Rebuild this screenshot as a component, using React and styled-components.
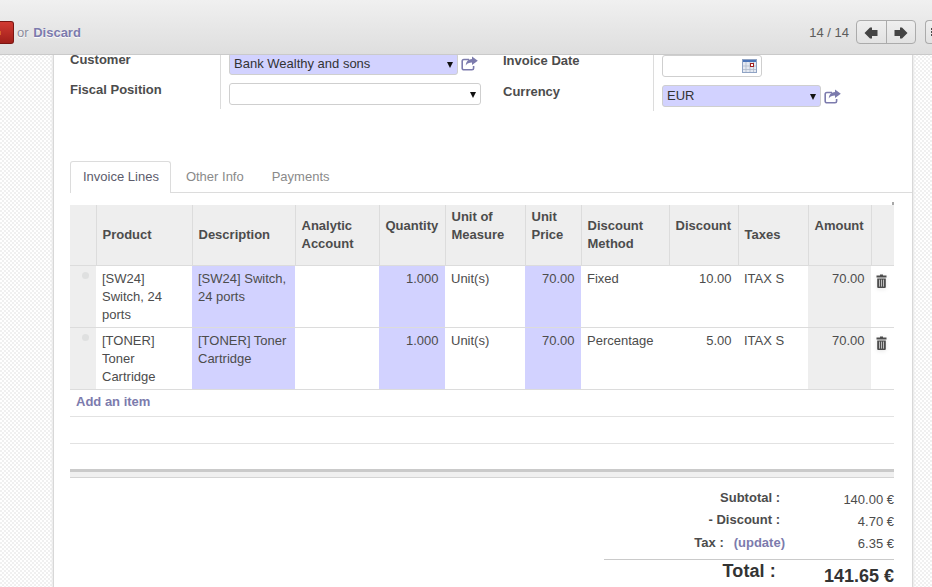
import React from "react";
import styled, { createGlobalStyle } from "styled-components";

const GlobalStyle = createGlobalStyle`
  html, body {
    margin: 0;
    padding: 0;
    height: 587px;
    overflow: hidden;
  }
  body {
    font-family: "Liberation Sans", Arial, sans-serif;
    font-size: 13px;
    line-height: 18px;
    color: #4c4c4c;
    background-color: #fff;
    background-image:
      linear-gradient(45deg, #f0f0f0 25%, transparent 25%, transparent 75%, #f0f0f0 75%),
      linear-gradient(45deg, #f0f0f0 25%, transparent 25%, transparent 75%, #f0f0f0 75%);
    background-size: 4px 4px;
    background-position: 0 0, 2px 2px;
  }
`;

const Page = styled.div`
  width: 932px;
  height: 587px;
  overflow: hidden;
  display: flex;
  flex-direction: column;
`;

const Toolbar = styled.div`
  height: 54px;
  flex: none;
  box-sizing: content-box;
  border-bottom: 1px solid #cacaca;
  background: linear-gradient(#f0f0f0, #dedede);
  display: flex;
  align-items: flex-start;
  position: relative;
  z-index: 2;
`;

const SaveButton = styled.div`
  width: 14px;
  height: 23px;
  margin-top: 21px;
  background-image: linear-gradient(#d23a32, #a01f1a);
  border: 1px solid #7a1512;
  border-left: none;
  border-radius: 0 3px 3px 0;
  box-sizing: border-box;
  position: relative;
`;

const SaveGlyph = styled.i`
  position: absolute;
  left: 0;
  top: 9px;
  width: 1px;
  height: 4px;
  background: #d8602a;
`;

const DiscardText = styled.span`
  margin: 24px 0 0 3px;
  color: #8b8b9b;
  text-shadow: 0 1px 1px #fff;
`;

const DiscardLink = styled.b`
  color: #7c7bad;
  margin-left: 1px;
`;

const Pager = styled.div`
  margin: 20px 0 0 auto;
  display: flex;
  align-items: flex-start;
`;

const PagerCount = styled.span`
  margin: 4px 8px 0 0;
  color: #5c5c5c;
  position: relative;
  left: 1px;
`;

const PagerGroup = styled.div`
  display: flex;
  width: 60px;
  height: 24px;
  box-sizing: border-box;
  border: 1px solid #ababab;
  border-radius: 4px;
  background: linear-gradient(#efefef, #e2e2e2);
`;

const PagerButton = styled.div`
  flex: 1;
  display: flex;
  align-items: center;
  justify-content: center;
  padding-top: 2px;
  & + & {
    border-left: 1px solid #ababab;
  }
`;

const MoreButton = styled(PagerGroup)`
  width: 20px;
  margin-left: 9px;
  flex: none;
  padding: 7px 0 0 5px;
  border-right: none;
  border-radius: 4px 0 0 4px;
  margin-right: -13px;
  gap: 1px;
  flex-direction: column;
`;

const MoreDot = styled.i`
  display: block;
  width: 3px;
  height: 2px;
  background: #4c4c4c;
`;

const Sheet = styled.div`
  width: 858px;
  flex: 1;
  min-height: 0;
  margin-left: 54px;
  box-sizing: border-box;
  background: #fff;
  box-shadow: -1px 0 0 #d8d8d8, 1px 0 0 #d8d8d8, -2px 0 2px #e8e8e8, 2px 0 2px #e8e8e8;
  padding: 0 18px 0 16px;
`;

const FormGrid = styled.div`
  display: flex;
  height: 106px;
  align-items: flex-start;
`;

const FormGroup = styled.div`
  width: ${(p) => p.$width}px;
  flex: none;
  display: grid;
  grid-template-columns: 150px 1fr;
  align-content: start;
`;

const Label = styled.b`
  display: block;
  color: #4c4c4c;
  margin-top: ${(p) => p.$shift}px;
`;

const FieldCell = styled.div`
  border-left: 1px solid #dcdcdc;
  padding: ${(p) => p.$top}px 0 0 8px;
  height: ${(p) => p.$height}px;
  box-sizing: border-box;
  display: flex;
  align-items: flex-start;
  gap: 3px;
`;

const Input = styled.div`
  width: ${(p) => p.$width}px;
  height: 22px;
  flex: none;
  box-sizing: border-box;
  margin-top: ${(p) => p.$shift || 0}px;
  border: 1px solid #cfcfcf;
  border-radius: 3px;
  background: ${(p) => (p.$required ? "#d2d2ff" : "#fff")};
  color: #333;
  padding: 0 4px;
  line-height: 20px;
  display: flex;
  align-items: center;
  justify-content: space-between;
`;

const Caret = styled.span`
  width: 0;
  height: 0;
  margin: 2px 0 0 0;
  border-left: 3px solid transparent;
  border-right: 3px solid transparent;
  border-top: 6px solid #111;
`;

const ShareIcon = styled.svg`
  flex: none;
  width: 17px;
  height: 15px;
  margin-top: ${(p) => p.$top}px;
`;

const Tabs = styled.div`
  height: 31px;
  margin: 0 -18px 12px 0;
  border-bottom: 1px solid #dcdcdc;
  display: flex;
  box-sizing: content-box;
`;

const Tab = styled.div`
  height: ${(p) => (p.$active ? 32 : 31)}px;
  box-sizing: border-box;
  padding: 6px ${(p) => (p.$active ? 11 : 12)}px 0 12px;
  margin-right: 2px;
  color: ${(p) => (p.$active ? "#5c5c6c" : "#8a8a8a")};
  background: ${(p) => (p.$active ? "#fff" : "transparent")};
  border: 1px solid ${(p) => (p.$active ? "#dcdcdc" : "transparent")};
  border-bottom: none;
  border-radius: 3px 3px 0 0;
  position: relative;
  z-index: 1;
`;

const TableWrap = styled.div`
  width: 824px;
  position: relative;
`;

const CornerMark = styled.i`
  position: absolute;
  right: 0;
  top: -3px;
  width: 2px;
  height: 3px;
  background: #a8a8a8;
`;

const LinesTable = styled.table`
  width: 824px;
  table-layout: fixed;
  border-collapse: collapse;
`;

const Head = styled.th`
  height: 60px;
  padding: ${(p) => p.$top || 0}px 0 0 6px;
  box-sizing: border-box;
  background: #eeeeee;
  border-left: 1px solid #dcdcdc;
  border-bottom: 1px solid #dcdcdc;
  font-size: 13px;
  line-height: 18px;
  font-weight: bold;
  text-align: left;
  color: #4c4c4c;
  vertical-align: ${(p) => (p.$top ? "top" : "middle")};
  &:first-child {
    border-left: none;
  }
`;

const Cell = styled.td`
  height: 62px;
  padding: 4px 6.5px 0 6px;
  box-sizing: border-box;
  vertical-align: top;
  color: #4c4c4c;
  text-align: ${(p) => (p.$right ? "right" : "left")};
  background: ${(p) => (p.$required ? "#d2d2ff" : p.$grey ? "#eeeeee" : "#fff")};
  border-bottom: 1px solid #dcdcdc;
`;

const HandleCell = styled(Cell)`
  padding: 6px 0 0 12px;
  background: #eeeeee;
`;

const Handle = styled.i`
  display: block;
  width: 7px;
  height: 7px;
  border-radius: 50%;
  background: #dfe0e0;
`;

const TrashButton = styled.svg`
  display: block;
  width: 11px;
  height: 14px;
  margin: 4px 0 0 -1px;
  filter: drop-shadow(0 1px 2px #e4e4e4);
`;

const FillRow = styled.div`
  height: ${(p) => p.$height}px;
  box-sizing: border-box;
  border-bottom: 1px solid #e2e2e2;
  padding: 3px 0 0 6px;
`;

const AddItem = styled.b`
  color: #7c7bad;
`;

const TableFoot = styled.div`
  height: 9px;
  margin-top: 25px;
  box-sizing: border-box;
  background: #f0f0f0;
  border-top: 3px solid #cacaca;
  border-bottom: 1px solid #d4d4d4;
`;

const Totals = styled.div`
  margin: 13px 0 0 534px;
  width: 290px;
`;

const TotalRow = styled.div`
  display: flex;
  justify-content: flex-end;
  align-items: baseline;
  height: 22px;
`;

const TotalLabel = styled.b`
  position: relative;
  top: ${(p) => p.$lift}px;
  color: #4c4c4c;
  margin-right: ${(p) => p.$gap}px;
  white-space: pre;
`;

const UpdateLink = styled.b`
  position: relative;
  top: -1px;
  color: #7c7bad;
  margin-right: 29px;
  margin-left: 10px;
`;

const TotalValue = styled.span`
  width: 80px;
  flex: none;
  text-align: right;
  color: #4c4c4c;
`;

const GrandRow = styled.div`
  display: flex;
  justify-content: flex-end;
  align-items: baseline;
  border-top: 1px solid #cacaca;
  margin-top: 2px;
  height: 28px;
`;

const GrandLabel = styled.b`
  font-size: 18px;
  color: #333;
  position: relative;
  top: -5px;
  margin-right: 48px;
  line-height: 24px;
  letter-spacing: 0.1px;
`;

const GrandValue = styled.b`
  font-size: 18px;
  color: #333;
  line-height: 32px;
`;

const Share = ({ top }) => (
  <ShareIcon $top={top} viewBox="0 0 17 15">
    <path d="M8 3.5H3A1.6 1.6 0 0 0 1.2 5v7.2A1.6 1.6 0 0 0 3 13.8h8a1.6 1.6 0 0 0 1.6-1.6V10" fill="none" stroke="#7c7bad" strokeWidth="1.6" />
    <path d="M11 0.5l5.8 4.3L11 9V6.4c-3 0-4.8 0.8-6.2 3C5 5.6 7.4 3.2 11 3z" fill="#7c7bad" />
  </ShareIcon>
);

const Trash = () => (
  <TrashButton viewBox="0 0 11 14">
    <path d="M4 0.5h3v1h3.5v2H0.5v-2H4z" fill="#4c4c4c" />
    <path d="M1.2 4.4h8.6V13a1 1 0 0 1-1 1H2.2a1 1 0 0 1-1-1z" fill="#4c4c4c" />
    <path d="M3.5 5.6v7M5.5 5.6v7M7.5 5.6v7" stroke="#c8c8c8" strokeWidth="0.9" />
  </TrashButton>
);

const Arrow = ({ left }) => (
  <svg width="14" height="12" viewBox="0 0 14 12">
    <path
      d={left ? "M0.5 6L6 0.5H8V3H13.5V9H8V11.5H6z" : "M13.5 6L8 0.5H6V3H0.5V9H6V11.5H8z"}
      fill="#444"
    />
  </svg>
);

const CalendarIcon = () => (
  <svg width="15" height="14" viewBox="0 0 15 14">
    <rect x="0" y="0" width="15" height="14" fill="#e4e9f2" />
    <rect x="0" y="0" width="15" height="3" fill="#4a74b8" />
    <path d="M0 7h15M0 10.5h15M4 3v11M8 3v11M11.5 3v11" stroke="#aeb9ca" strokeWidth="0.8" />
    <rect x="8.5" y="4.5" width="3" height="3" fill="#fff" stroke="#a02020" />
    <rect x="0.5" y="0.5" width="14" height="13" fill="none" stroke="#8fa3c4" />
  </svg>
);

const columns = [26, 96, 103, 84, 66, 80, 56, 88, 69, 70, 63, 23];

const lines = [
  {
    product: "[SW24] Switch, 24 ports",
    description: "[SW24] Switch, 24 ports",
    method: "Fixed",
    discount: "10.00",
  },
  {
    product: "[TONER] Toner Cartridge",
    description: "[TONER] Toner Cartridge",
    method: "Percentage",
    discount: "5.00",
  },
];

const App = () => {
  return (
    <Page>
      <GlobalStyle />
      <Toolbar>
        <SaveButton>
          <SaveGlyph />
        </SaveButton>
        <DiscardText>
          or <DiscardLink>Discard</DiscardLink>
        </DiscardText>
        <Pager>
          <PagerCount>14 / 14</PagerCount>
          <PagerGroup>
            <PagerButton><Arrow left /></PagerButton>
            <PagerButton><Arrow /></PagerButton>
          </PagerGroup>
          <MoreButton>
            <MoreDot />
            <MoreDot />
            <MoreDot />
          </MoreButton>
        </Pager>
      </Toolbar>
      <Sheet>
        <FormGrid>
          <FormGroup $width={433}>
            <Label $shift={-4}>Customer</Label>
            <FieldCell $top={0} $height={27}>
              <Input $width={229} $required $shift={-2}>
                Bank Wealthy and sons
                <Caret />
              </Input>
              <Share top={1} />
            </FieldCell>
            <Label $shift={-1}>Fiscal Position</Label>
            <FieldCell $top={1} $height={27}>
              <Input $width={252}>
                <span />
                <Caret />
              </Input>
            </FieldCell>
          </FormGroup>
          <FormGroup $width={409}>
            <Label $shift={-3}>Invoice Date</Label>
            <FieldCell $top={0} $height={29}>
              <Input $width={100}>
                <span />
                <CalendarIcon />
              </Input>
            </FieldCell>
            <Label $shift={-1}>Currency</Label>
            <FieldCell $top={1} $height={27}>
              <Input $width={159} $required>
                EUR
                <Caret />
              </Input>
              <Share top={4} />
            </FieldCell>
          </FormGroup>
        </FormGrid>
        <Tabs>
          <Tab $active>Invoice Lines</Tab>
          <Tab>Other Info</Tab>
          <Tab>Payments</Tab>
        </Tabs>
        <TableWrap>
          <CornerMark />
          <LinesTable>
            <colgroup>
              {columns.map((width, i) => (
                <col key={i} width={width} />
              ))}
            </colgroup>
            <thead>
              <tr>
                <Head />
                <Head>Product</Head>
                <Head>Description</Head>
                <Head>Analytic Account</Head>
                <Head $top={12}>Quantity</Head>
                <Head $top={3}>Unit of Measure</Head>
                <Head $top={3}>Unit Price</Head>
                <Head>Discount Method</Head>
                <Head $top={12}>Discount</Head>
                <Head>Taxes</Head>
                <Head $top={12}>Amount</Head>
                <Head />
              </tr>
            </thead>
            <tbody>
              {lines.map((line) => (
                <tr key={line.product}>
                  <HandleCell><Handle /></HandleCell>
                  <Cell>{line.product}</Cell>
                  <Cell $required>{line.description}</Cell>
                  <Cell />
                  <Cell $required $right>1.000</Cell>
                  <Cell>Unit(s)</Cell>
                  <Cell $required $right>70.00</Cell>
                  <Cell>{line.method}</Cell>
                  <Cell $right>{line.discount}</Cell>
                  <Cell>ITAX S</Cell>
                  <Cell $grey $right>70.00</Cell>
                  <Cell><Trash /></Cell>
                </tr>
              ))}
            </tbody>
          </LinesTable>
          <FillRow $height={27}><AddItem>Add an item</AddItem></FillRow>
          <FillRow $height={27} />
          <TableFoot />
        </TableWrap>
        <Totals>
          <TotalRow>
            <TotalLabel $gap={34} $lift={-2}>Subtotal :</TotalLabel>
            <TotalValue>140.00 €</TotalValue>
          </TotalRow>
          <TotalRow>
            <TotalLabel $gap={34} $lift={-2}>- Discount :</TotalLabel>
            <TotalValue>4.70 €</TotalValue>
          </TotalRow>
          <TotalRow>
            <TotalLabel $gap={0} $lift={-1}>Tax :</TotalLabel>
            <UpdateLink>(update)</UpdateLink>
            <TotalValue>6.35 €</TotalValue>
          </TotalRow>
          <GrandRow>
            <GrandLabel>Total :</GrandLabel>
            <GrandValue>141.65 €</GrandValue>
          </GrandRow>
        </Totals>
      </Sheet>
    </Page>
  );
};

export default App;
